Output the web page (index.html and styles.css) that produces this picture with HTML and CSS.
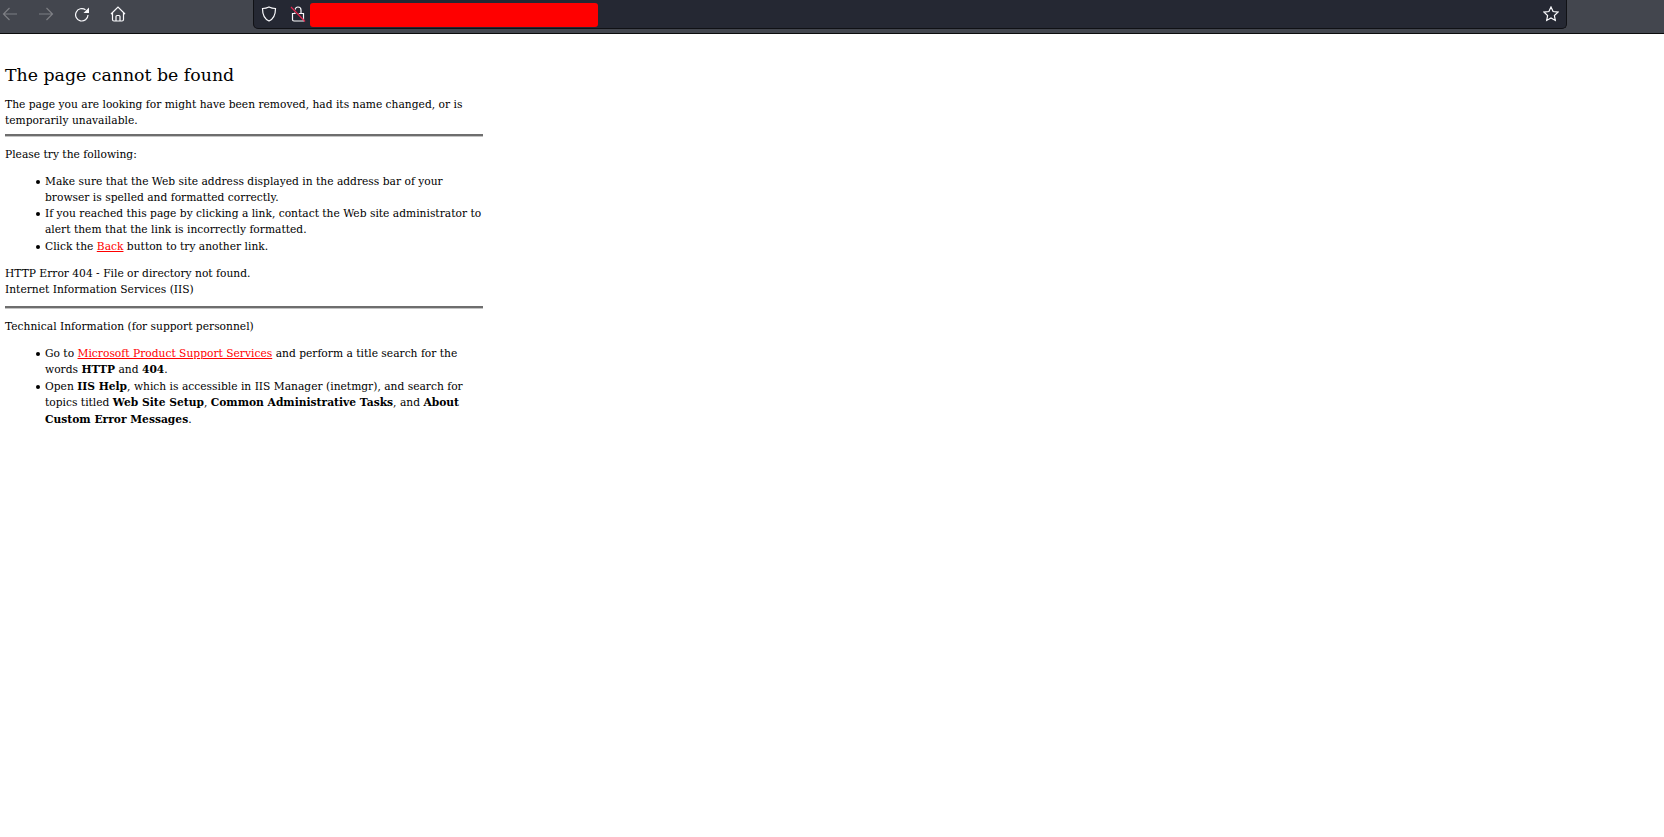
FILE: index.html

```html
<!DOCTYPE html>
<html lang="en">
<head>
  <meta charset="UTF-8">
  <title>The page cannot be found</title>
  <meta name="viewport" content="width=device-width, initial-scale=1.0">
  <link rel="stylesheet" href="styles.css">
</head>
<body>
  <div class="toolbar">
    <div class="nav-buttons">
      <svg class="nav-icon dim" viewBox="0 0 16 16"><path d="M15 8H1.500M7.500 2L1.500 8l6 6"/></svg>
      <svg class="nav-icon dim" viewBox="0 0 16 16"><path d="M1 8h13.500M8.500 2l6 6-6 6"/></svg>
      <svg class="nav-icon" viewBox="0 0 16 16"><path d="M14 9a6.200 6.200 0 1 1-2.500-5.200"/><path class="fill" d="M15 1.500V7H9.500z"/></svg>
      <svg class="nav-icon" viewBox="0 0 16 16"><path d="M1 8l7-7 7 7M2.500 7v6.500a1.500 1.500 0 0 0 1.500 1.500h8a1.500 1.500 0 0 0 1.500-1.500V7M6 15v-4.500a1 1 0 0 1 1-1h2a1 1 0 0 1 1 1V15"/></svg>
    </div>
    <div class="urlbar">
      <svg class="url-icon shield" viewBox="0 0 16 16"><path d="M8 1C6 2 4 2.500 1.500 2.500 1.500 9 3.500 13 8 15c4.500-2 6.500-6 6.500-12.500C12 2.500 10 2 8 1z"/></svg>
      <svg class="url-icon lock" viewBox="0 0 16 16"><path d="M5 7V4a3 3 0 0 1 6 0V7"/><path d="M13.500 7.500H2.500V13.500a1.500 1.500 0 0 0 1.500 1.500h9.500z"/><path class="slash-gap" d="M2.500 2.500l10 10.500"/><path class="slash" d="M1 1l14 14.500"/></svg>
      <div class="redacted"></div>
      <svg class="url-icon star" viewBox="0 0 16 16"><path d="M8 1l2.100 4.500 4.900.6-3.600 3.400.9 4.900L8 12l-4.300 2.400.9-4.900L1 6.100l4.900-.6z"/></svg>
    </div>
  </div>

  <div class="page">
    <h1>The page cannot be found</h1>
    <p class="before-rule">The page you are looking for might have been removed, had its name changed, or is temporarily unavailable.</p>
    <hr>
    <p class="lead">Please try the following:</p>
    <ul>
      <li>Make sure that the Web site address displayed in the address bar of your browser is spelled and formatted correctly.</li>
      <li>If you reached this page by clicking a link, contact the Web site administrator to alert them that the link is incorrectly formatted.</li>
      <li class="back">Click the <a href="#">Back</a> button to try another link.</li>
    </ul>
    <p class="status">HTTP Error 404 - File or directory not found.<br>Internet Information Services (IIS)</p>
    <hr>
    <p>Technical Information (for support personnel)</p>
    <ul class="tech">
      <li>Go to <a href="#">Microsoft Product Support Services</a> and perform a title search for the words <b>HTTP</b> and <b>404</b>.</li>
      <li>Open <b>IIS Help</b>, which is accessible in IIS Manager (inetmgr), and search for topics titled <b>Web Site Setup</b>, <b>Common Administrative Tasks</b>, and <b>About Custom Error Messages</b>.</li>
    </ul>
  </div>
</body>
</html>
```

FILE: styles.css

```css
html, body {
  margin: 0;
  background: #fff;
}
body {
  font-family: "DejaVu Serif", serif;
  font-size: 10.7px;
  line-height: 16px;
  color: #000;
  overflow: hidden;
  height: 837px;
}
.toolbar {
  display: flex;
  height: 33px;
  background: #43464e;
  border-bottom: 1px solid #0c0c0d;
}
.nav-buttons {
  display: flex;
  align-items: center;
  gap: 20px;
  width: 253px;
  padding: 0 0 6px 2px;
  box-sizing: border-box;
}
.nav-icon {
  width: 16px;
  height: 16px;
  fill: none;
  stroke: #fbfbfe;
  stroke-width: 1.2;
}
.nav-icon.dim {
  stroke: #7d7f84;
}
.fill {
  fill: #fbfbfe;
  stroke: none;
}
.urlbar {
  display: flex;
  align-items: center;
  width: 1314px;
  height: 29px;
  box-sizing: border-box;
  padding: 0 7px 1px 7px;
  background: #252833;
  border: 1px solid #101115;
  border-top: none;
  border-radius: 0 0 5px 5px;
}
.url-icon {
  width: 16px;
  height: 16px;
  fill: none;
  stroke: #fbfbfe;
  stroke-width: 1.2;
  flex: none;
}
.lock {
  margin-left: 13px;
}
.slash-gap {
  stroke: #252833;
  stroke-width: 2.500;
}
.slash {
  stroke: #e22850;
}
.redacted {
  width: 288px;
  height: 24px;
  margin: 2px 0 0 4px;
  background: #f00;
  border-radius: 3px;
}
.star {
  margin-left: auto;
}
.page {
  width: 478px;
  margin-left: 5px;
  padding-top: 31px;
}
h1 {
  font-size: 17.33px;
  line-height: 20px;
  font-weight: normal;
  margin: 0 0 12px;
}
p {
  margin: 10.67px 0;
}
h1 + p {
  margin-top: 0;
}
.before-rule {
  margin-bottom: 5px;
}
.status {
  margin-bottom: 8px;
}
hr {
  height: 2px;
  margin: 5px 0 9px;
  border: none;
  border-bottom: 1px solid #c4c4c4;
  background: #6e6e6e;
}
hr + p {
  margin-top: 9.67px;
}
.lead {
  margin-bottom: 11.67px;
}
ul {
  margin: 10.67px 0;
  padding-left: 40px;
  width: 440px;
  list-style: none;
}
li {
  position: relative;
}
/* bigger dot than the default disc */
li::before {
  content: "";
  position: absolute;
  left: -9px;
  top: 6px;
  width: 4px;
  height: 4px;
  border-radius: 50%;
  background: #000;
}
li.back {
  margin-top: 1px;
}
/* bold text makes these lines a bit taller */
.tech {
  margin-top: 10.67px;
  padding-top: 0.4px;
  line-height: 16.6px;
}
a {
  color: #f00;
}
```
